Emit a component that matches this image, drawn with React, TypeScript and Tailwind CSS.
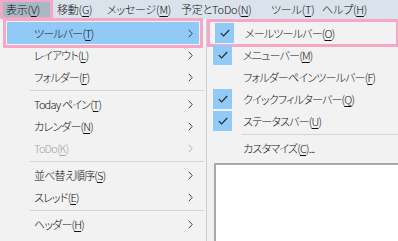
import React from 'react';

type Label = { pre: string; k: string; post?: string };

const Mn: React.FC<Label> = ({ pre, k, post = ')' }) => (
  <span className="whitespace-nowrap">
    {pre}
    <span className="underline underline-offset-[2px] decoration-[1px]">{k}</span>
    {post}
  </span>
);

const Chevron: React.FC<{ dim?: boolean }> = ({ dim }) => (
  <svg width="5" height="9" viewBox="0 0 5 9" className="shrink-0">
    <path d="M0.8 0.8 L4.2 4.5 L0.8 8.2" fill="none" stroke={dim ? '#b0b0b0' : '#404040'} strokeWidth="1" />
  </svg>
);

const Check = () => (
  <svg width="10" height="8" viewBox="0 0 10 8">
    <path d="M0.8 4.2 L3.6 7 L9.2 1" fill="none" stroke="#2b2b2b" strokeWidth="1.2" />
  </svg>
);

// widths put each label where the title bar has it
const topMenus: { label: Label; w: string }[] = [
  { label: { pre: '移動(', k: 'G' }, w: 'w-[50px]' },
  { label: { pre: 'メッセージ(', k: 'M' }, w: 'w-[74px]' },
  { label: { pre: '予定とToDo(', k: 'N' }, w: 'w-[90px]' },
  { label: { pre: 'ツール(', k: 'T' }, w: 'w-[51px]' },
  { label: { pre: 'ヘルプ(', k: 'H' }, w: 'w-[50px]' },
];

type LeftItem = { label: Label; dim?: boolean } | 'sep';

const leftItems: LeftItem[] = [
  { label: { pre: 'レイアウト(', k: 'L' } },
  { label: { pre: 'フォルダー(', k: 'F' } },
  'sep',
  { label: { pre: 'Today ペイン(', k: 'T' } },
  { label: { pre: 'カレンダー(', k: 'N' } },
  { label: { pre: 'ToDo(', k: 'K' }, dim: true },
  'sep',
  { label: { pre: '並べ替え順序(', k: 'S' } },
  { label: { pre: 'スレッド(', k: 'E' } },
  'sep',
  { label: { pre: 'ヘッダー(', k: 'H' } },
];

type SubItem = { label: Label; checked?: boolean } | 'sep';

const subItems: SubItem[] = [
  { label: { pre: 'メニューバー(', k: 'M' }, checked: true },
  { label: { pre: 'フォルダーペインツールバー(', k: 'F' } },
  { label: { pre: 'クイックフィルターバー(', k: 'Q' }, checked: true },
  { label: { pre: 'ステータスバー(', k: 'U' }, checked: true },
  'sep',
  { label: { pre: 'カスタマイズ(', k: 'C', post: ')...' } },
];

const SubRow: React.FC<{ label: Label; checked?: boolean }> = ({ label, checked }) => (
  <div className="h-[22px] flex items-center">
    <div className={`w-[19px] h-[20px] ml-[5px] flex items-center justify-center ${checked ? 'bg-[#91c9f7]' : ''}`}>
      {checked && <Check />}
    </div>
    <div className="ml-[11px]">
      <Mn {...label} />
    </div>
  </div>
);

export default function App() {
  return (
    <div className="w-[398px] h-[241px] overflow-hidden bg-[#f0f0f0] text-[11px] tracking-[-0.8px] leading-none text-[#111] font-light font-['Noto_Sans_CJK_JP','Yu_Gothic_UI',sans-serif] [font-feature-settings:'palt']">
      {/* menu bar */}
      <div className="h-[19px] bg-[#dae3eb] flex items-center tracking-[-0.2px]">
        <div className="ml-[3px] h-[15px] w-[47px] pl-[3px] shrink-0 bg-[#a7b8c4] flex items-center outline-[3px] outline-[#f6a7c7] outline-offset-0">
          <Mn pre="表示(" k="V" />
        </div>
        <div className="w-[4px] shrink-0" />
        {topMenus.map((m) => (
          <div key={m.label.k} className={`${m.w} pl-[3px] shrink-0`}>
            <Mn {...m.label} />
          </div>
        ))}
      </div>

      <div className="flex">
        {/* left drop-down */}
        <div className="w-[207px] h-[222px] bg-[#f2f2f2] border-r border-[#cfcfcf] pt-[3px] px-[2px] flex flex-col">
          <div className="h-[22px] mx-[5px] bg-[#91c9f7] flex items-center pl-[27px] pr-[6px] outline-[3px] outline-[#f6a7c7] outline-offset-[1px]">
            <span className="flex-1"><Mn pre="ツールバー(" k="T" /></span>
            <Chevron />
          </div>
          {leftItems.map((it, i) =>
            it === 'sep' ? (
              <div key={i} className="h-[5px] flex items-center pl-[28px]">
                <div className="h-px w-full bg-[#d5d5d5]" />
              </div>
            ) : (
              <div key={i} className={`h-[22px] flex items-center pl-[32px] pr-[11px] ${it.dim ? 'text-[#a3a3a3]' : ''}`}>
                <span className="flex-1"><Mn {...it.label} /></span>
                <Chevron dim={it.dim} />
              </div>
            )
          )}
        </div>

        {/* right column */}
        <div className="flex-1 flex flex-col">
          <div className="h-[144px] bg-[#f2f2f2] pt-[3px] pl-[1px] flex flex-col">
            <div className="mx-[2px] outline-[3px] outline-[#f6a7c7] outline-offset-0">
              <SubRow label={{ pre: 'メールツールバー(', k: 'O' }} checked />
            </div>
            {subItems.map((it, i) =>
              it === 'sep' ? (
                <div key={i} className="h-[5px] flex items-center pl-[33px]">
                  <div className="h-px w-full bg-[#d5d5d5]" />
                </div>
              ) : (
                <SubRow key={i} label={it.label} checked={it.checked} />
              )
            )}
          </div>
          <div className="flex-1 flex pl-[7px]">
            <div className="flex-1 bg-white border-t-2 border-l-2 border-[#a8a8a8]" />
          </div>
        </div>
      </div>
    </div>
  );
}
